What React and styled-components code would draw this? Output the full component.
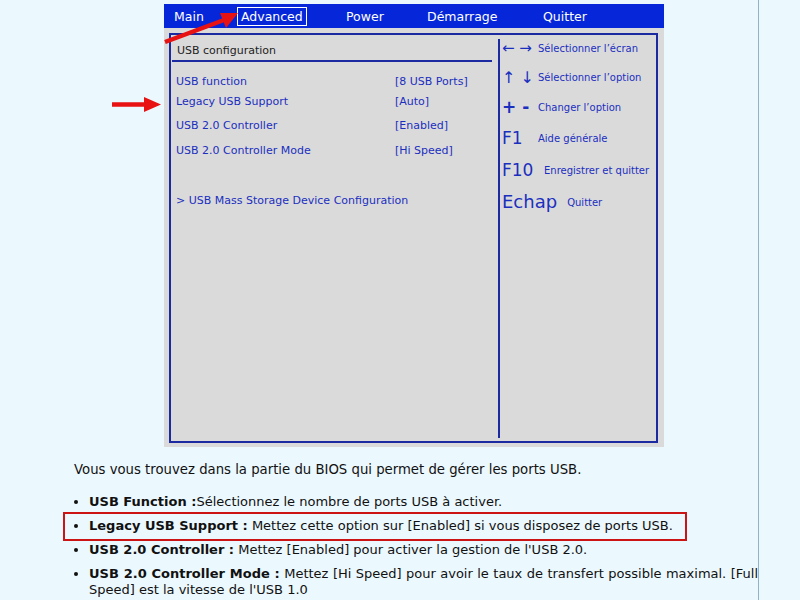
import React from "react";
import styled, { createGlobalStyle } from "styled-components";

const GlobalStyle = createGlobalStyle`
  html, body {
    margin: 0;
    padding: 0;
    background: #ebf8fe;
  }
  body {
    font-family: "DejaVu Sans", Verdana, sans-serif;
  }
`;

const Page = styled.div`
  position: relative;
  width: 759px;
  min-height: 600px;
  box-sizing: border-box;
  border-right: 1px solid #8fb4c4;
  padding-top: 4px;
  overflow: hidden;
`;

const Figure = styled.div`
  margin-left: 164px;
  width: 500px;
`;

const TabBar = styled.div`
  height: 24px;
  background: #0627d9;
  display: flex;
  align-items: center;
  padding-left: 10px;
`;

const Tab = styled.div`
  width: ${(p) => p.$w}px;
  flex: none;
  color: #ffffff;
  font-size: 12.5px;
  line-height: 17px;
  & > span {
    display: inline-block;
    padding: 0 3px;
    border: 1px solid ${(p) => (p.$active ? "#ffffff" : "transparent")};
    margin-left: ${(p) => (p.$active ? "0" : "-4px")};
  }
`;

const Panel = styled.div`
  height: 419px;
  background: #dadada;
  box-sizing: border-box;
  padding: 5px 6px 4px 5px;
`;

const Frame = styled.div`
  height: 100%;
  box-sizing: border-box;
  border: 2px solid #1b2aa0;
  display: grid;
  grid-template-columns: 327px 1fr;
`;

const LeftCol = styled.div`
  padding: 0 6px 0 1px;
  color: #1b2fbf;
  font-size: 11px;
`;

const SectionTitle = styled.div`
  height: 25px;
  line-height: 31px;
  padding-left: 5px;
  color: #222222;
  border-bottom: 2px solid #1b2aa0;
`;

const SettingRow = styled.div`
  display: grid;
  grid-template-columns: 219px 1fr;
  line-height: 20px;
  padding-left: 4px;
  white-space: nowrap;
  margin-top: ${(p) => p.$top || 0}px;
`;

const RightCol = styled.div`
  margin: 4px 0 3px;
  border-left: 2px solid #1b2aa0;
  color: #1b2fbf;
`;

const HelpList = styled.div`
  margin-top: -5px;
  padding-left: 2px;
`;

const HelpRow = styled.div`
  display: flex;
  align-items: center;
  height: ${(p) => p.$h}px;
`;

const HelpKey = styled.div`
  min-width: 36px;
  margin-right: ${(p) => p.$gap || 0}px;
  font-size: ${(p) => p.$size || 15}px;
  font-weight: ${(p) => (p.$bold ? 700 : 400)};
  line-height: 1;
  white-space: pre;
`;

const HelpText = styled.div`
  font-size: 10px;
`;

const Body = styled.div`
  padding: 15px 0 0 74px;
  color: #111111;
  font-size: 13px;
  line-height: 16px;
`;

const Intro = styled.p`
  margin: 0 0 16px;
  font-size: 13.25px;
`;

const List = styled.ul`
  margin: 0;
  padding-left: 15px;
`;

const Item = styled.li`
  position: relative;
  margin-bottom: 8px;
  width: ${(p) => (p.$highlight ? "fit-content" : "auto")};
  text-align: justify;
  &::after {
    content: "";
    display: ${(p) => (p.$highlight ? "block" : "none")};
    position: absolute;
    left: -26px;
    right: -14px;
    top: -6px;
    bottom: -7px;
    border: 2px solid #cc1414;
  }
`;

const Overlay = styled.svg`
  position: absolute;
  left: 0;
  top: 0;
  pointer-events: none;
`;

const tabs = [
  { label: "Main", w: 63 },
  { label: "Advanced", w: 109, active: true },
  { label: "Power", w: 81 },
  { label: "Démarrage", w: 116 },
  { label: "Quitter", w: 80 },
];

const settings = [
  { label: "USB function", value: "[8 USB Ports]", top: 10 },
  { label: "Legacy USB Support", value: "[Auto]", top: 0 },
  { label: "USB 2.0 Controller", value: "[Enabled]", top: 4 },
  { label: "USB 2.0 Controller Mode", value: "[Hi Speed]", top: 5 },
];

const help = [
  { key: "← →", text: "Sélectionner l’écran", size: 15, h: 29 },
  { key: "↑ ↓", text: "Sélectionner l’option", size: 16, h: 29 },
  { key: "+ -", text: "Changer l’option", size: 17, h: 30, bold: true },
  { key: "F1", text: "Aide générale", size: 17, h: 33 },
  { key: "F10", text: "Enregistrer et quitter", size: 17, h: 31, gap: 6 },
  { key: "Echap", text: "Quitter", size: 18, h: 32, gap: 10 },
];

export default function App() {
  return (
    <Page>
      <GlobalStyle />
      <Figure>
        <TabBar>
          {tabs.map((t) => (
            <Tab key={t.label} $w={t.w} $active={t.active}>
              <span>{t.label}</span>
            </Tab>
          ))}
        </TabBar>
        <Panel>
          <Frame>
            <LeftCol>
              <SectionTitle>USB configuration</SectionTitle>
              {settings.map((s) => (
                <SettingRow key={s.label} $top={s.top}>
                  <span>{s.label}</span>
                  <span>{s.value}</span>
                </SettingRow>
              ))}
              <SettingRow $top={30}>
                <span>&gt; USB Mass Storage Device Configuration</span>
              </SettingRow>
            </LeftCol>
            <RightCol>
              <HelpList>
                {help.map((h) => (
                  <HelpRow key={h.text} $h={h.h}>
                    <HelpKey $size={h.size} $bold={h.bold} $gap={h.gap}>
                      {h.key}
                    </HelpKey>
                    <HelpText>{h.text}</HelpText>
                  </HelpRow>
                ))}
              </HelpList>
            </RightCol>
          </Frame>
        </Panel>
      </Figure>
      <Body>
        <Intro>
          Vous vous trouvez dans la partie du BIOS qui permet de gérer les ports USB.
        </Intro>
        <List>
          <Item>
            <b>USB Function :</b>Sélectionnez le nombre de ports USB à activer.
          </Item>
          <Item $highlight>
            <b>Legacy USB Support :</b> Mettez cette option sur [Enabled] si vous disposez de ports USB.
          </Item>
          <Item>
            <b>USB 2.0 Controller :</b> Mettez [Enabled] pour activer la gestion de l'USB 2.0.
          </Item>
          <Item>
            <b>USB 2.0 Controller Mode :</b> Mettez [Hi Speed] pour avoir le taux de transfert possible maximal. [Full Speed] est la vitesse de l'USB 1.0
          </Item>
        </List>
      </Body>
      <Overlay width="300" height="130" viewBox="0 0 300 130">
        <line x1="165" y1="42" x2="224" y2="20" stroke="#e81212" strokeWidth="4.5" />
        <polygon points="238,13 220,13 226,28" fill="#e81212" />
        <line x1="112" y1="104.5" x2="146" y2="104.5" stroke="#e81212" strokeWidth="4.5" />
        <polygon points="144,97 161,104.5 144,112" fill="#e81212" />
      </Overlay>
    </Page>
  );
}
